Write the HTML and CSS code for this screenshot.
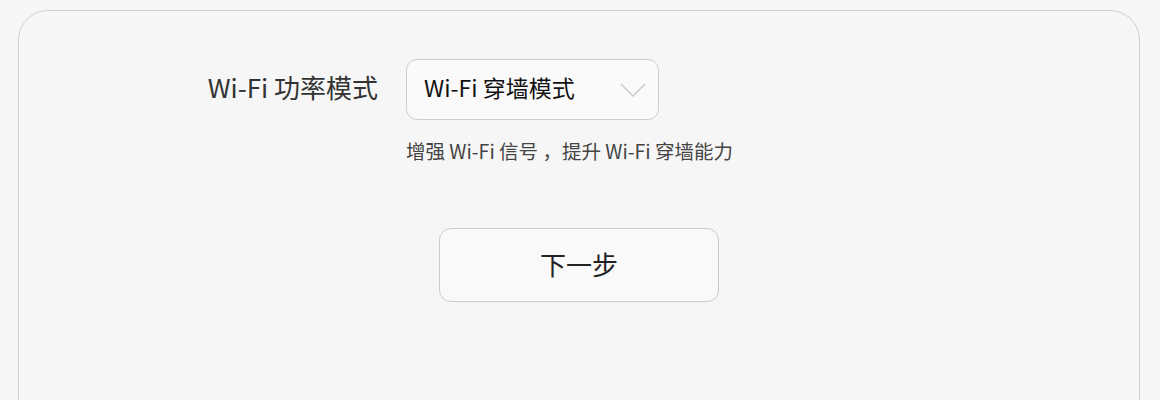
FILE: index.html
```html
<!DOCTYPE html>
<html lang="zh-CN">
<head>
  <meta charset="UTF-8" />
  <meta name="viewport" content="width=device-width, initial-scale=1.0" />
  <title>Wi-Fi 功率模式</title>
  <link rel="stylesheet" href="styles.css">
</head>
<body>
  <div class="panel">
    <div class="form-row">
      <label class="form-label">Wi-Fi 功率模式</label>
      <div class="select">
        <span class="select-value">Wi-Fi 穿墙模式</span>
        <svg class="select-arrow" width="26" height="16" viewBox="0 0 26 16">
          <polyline points="1,2 13,14 25,2" fill="none" stroke="#c8c8c8" stroke-width="1.4" />
        </svg>
      </div>
    </div>
    <p class="hint">增强 Wi-Fi 信号 ，提升 Wi-Fi 穿墙能力</p>
    <div class="actions">
      <button class="btn-next">下一步</button>
    </div>
  </div>
</body>
</html>
```

FILE: styles.css
```css
* {
  box-sizing: border-box;
  margin: 0;
  padding: 0;
  font-family: "Noto Sans CJK SC", "Noto Sans", sans-serif;
}
body {
  background-color: #f6f6f6;
  padding: 10px 20px 0 18px;
  height: 400px;
  overflow: hidden;
}
.panel {
  background: #f6f6f6;
  border: 1.5px solid #cfcfcf;
  border-radius: 30px;
  height: 460px;
  padding-top: 48px;
}
.form-row {
  display: flex;
  align-items: center;
  gap: 28px;
}
.form-label {
  width: 359px;
  text-align: right;
  font-size: 26px;
  line-height: 34px;
  padding-bottom: 6px;
  color: #333;
}
.select {
  width: 253px;
  height: 61px;
  display: flex;
  align-items: center;
  justify-content: space-between;
  padding: 0 12px 5px 17px;
  background: #fafafa;
  border: 1.5px solid #cdcdcd;
  border-radius: 11px;
}
.select-value {
  font-size: 23px;
  color: #111;
}
.select-arrow {
  margin-top: 5px;
}
.hint {
  margin: 18px 0 0 387px;
  font-size: 19.5px;
  line-height: 26px;
  color: #444;
}
.actions {
  display: flex;
  justify-content: center;
  margin-top: 64px;
}
.btn-next {
  width: 280px;
  height: 74px;
  padding-bottom: 4px;
  background: #f9f9f9;
  border: 1.5px solid #cbcbcb;
  border-radius: 12px;
  font-size: 26px;
  color: #222;
}
```
